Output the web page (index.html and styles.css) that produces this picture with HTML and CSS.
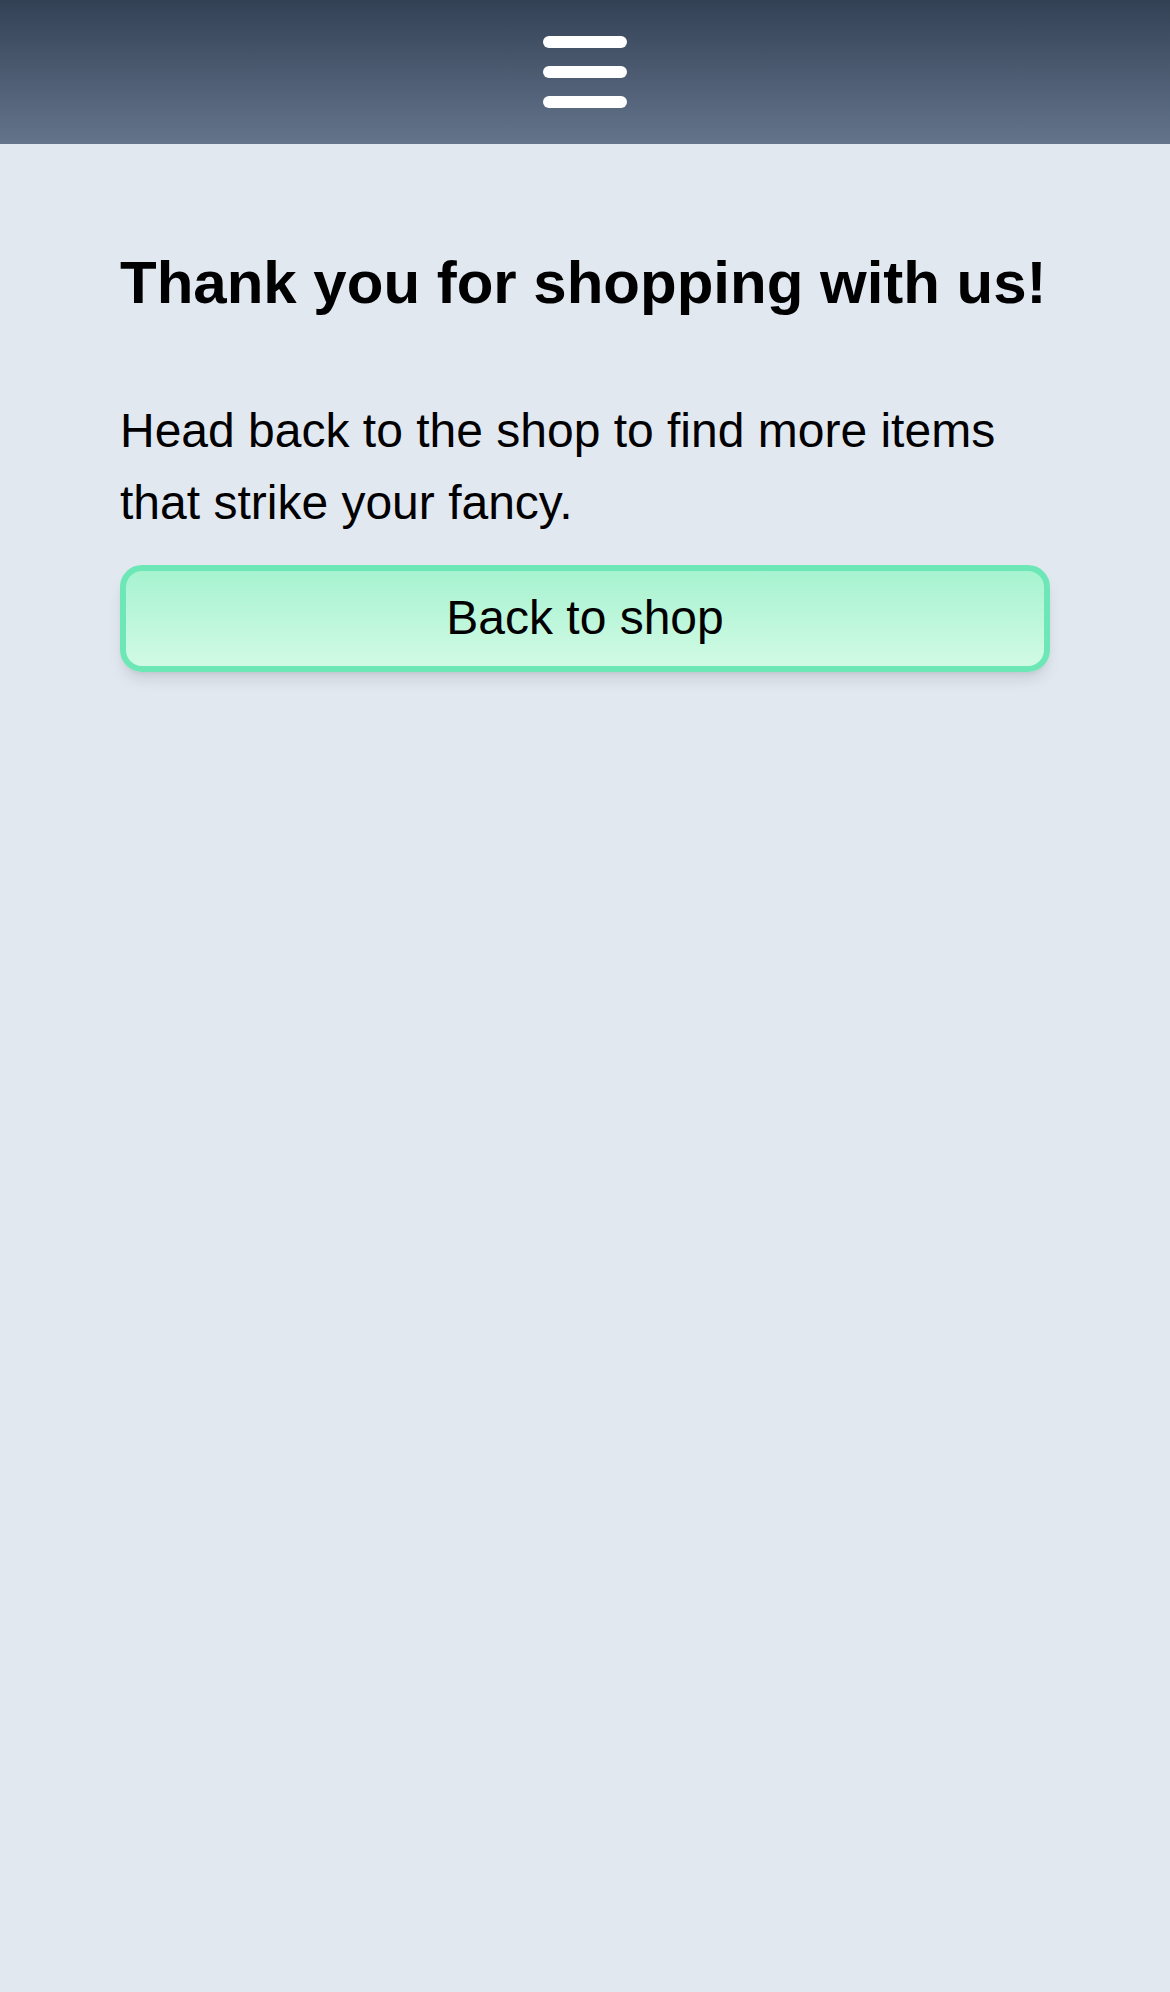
FILE: index.html
```html
<!DOCTYPE html>
<html lang="en">
<head>
<meta charset="utf-8">
<title>Thank you</title>
<link rel="stylesheet" href="styles.css">
</head>
<body>
<header class="topbar">
  <button class="menu-btn" aria-label="Menu">
    <svg width="84" height="72" viewBox="0 0 84 72" aria-hidden="true">
      <rect x="0" y="0" width="84" height="12" rx="6" fill="#fff"/>
      <rect x="0" y="30" width="84" height="12" rx="6" fill="#fff"/>
      <rect x="0" y="60" width="84" height="12" rx="6" fill="#fff"/>
    </svg>
  </button>
</header>
<main class="content">
  <h1 class="title">Thank you for shopping with us!</h1>
  <p class="lead">Head back to the shop to find more items that strike your fancy.</p>
  <a class="shop-btn" href="#">Back to shop</a>
</main>
</body>
</html>
```
FILE: styles.css
```css
html, body {
  margin: 0;
  padding: 0;
}
body {
  background: #e2e8f0;
  font-family: "Liberation Sans", Arial, sans-serif;
  color: #000;
  min-height: 1992px;
}
.topbar {
  height: 144px;
  background: linear-gradient(to bottom, #334155, #64748b);
  display: flex;
  align-items: center;
  justify-content: center;
}
.menu-btn {
  background: none;
  border: 0;
  padding: 0;
  margin: 0;
  display: flex;
  cursor: pointer;
}
.content {
  display: flex;
  flex-direction: column;
  padding: 103px 120px 0;
}
.title {
  margin: 0;
  font-size: 60px;
  line-height: 72px;
  font-weight: 700;
}
.lead {
  margin: 76px 0 0;
  font-size: 48px;
  line-height: 72px;
}
.shop-btn {
  margin-top: 26px;
  display: block;
  text-align: center;
  text-decoration: none;
  color: #000;
  font-size: 48px;
  line-height: 72px;
  padding: 11px 0 12px;
  border: 6px solid #6ee7b7;
  border-radius: 22px;
  background: linear-gradient(to bottom, #a7f3d0, #d1fae5);
  box-shadow: 0 10px 15px -3px rgba(0, 0, 0, 0.1), 0 4px 6px -4px rgba(0, 0, 0, 0.1);
}
```
